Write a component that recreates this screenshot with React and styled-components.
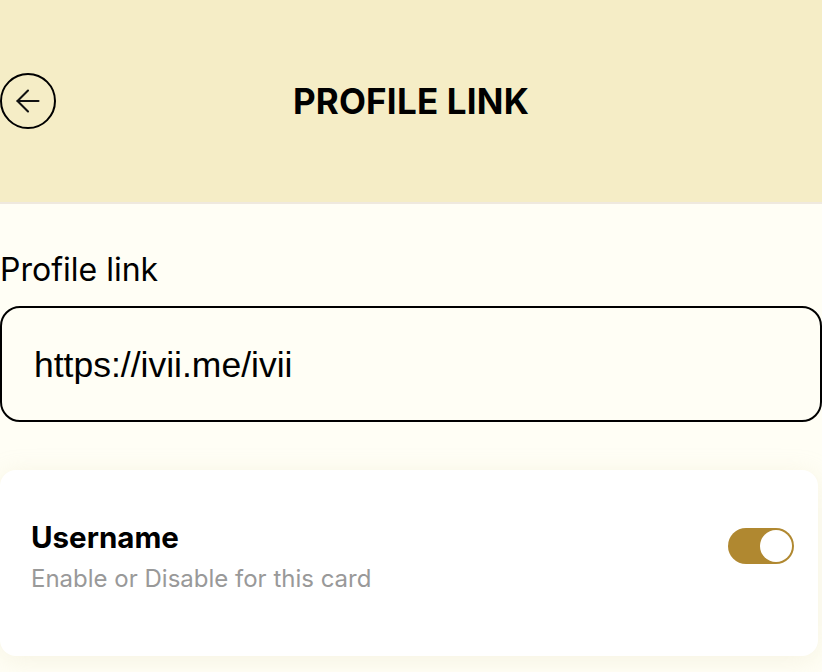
import React from 'react'
import styled, {createGlobalStyle} from 'styled-components'
import {ArrowLeft} from 'lucide-react'

const GlobalStyle = createGlobalStyle`
  html, body {
    margin: 0;
    padding: 0;
    background: #fffef5;
  }
  body {
    font-family: Inter, "Noto Sans", sans-serif;
    color: #000;
  }
  * {
    box-sizing: border-box;
  }
`

const Page = styled.div`
  width: 822px;
  min-height: 672px;
  background: #fffef5;
`

const Header = styled.header`
  height: 204px;
  background: #f5edc6;
  border-bottom: 2px solid #efe9df;
  display: flex;
  align-items: center;
  justify-content: center;
  position: relative;
`

const BackButton = styled.button`
  position: absolute;
  left: 0;
  top: 73px;
  width: 56px;
  height: 56px;
  border-radius: 50%;
  border: 2px solid #000;
  background: transparent;
  display: flex;
  align-items: center;
  justify-content: center;
  padding: 0;
  cursor: pointer;
  color: #111;
`

const Title = styled.h1`
  margin: 0;
  font-size: 35px;
  font-weight: 700;
  letter-spacing: 0.2px;
`

const Content = styled.main`
  padding-top: 48px;
  display: flex;
  flex-direction: column;
`

const Label = styled.label`
  font-size: 32px;
  line-height: 36px;
  margin-bottom: 18px;
`

const LinkInput = styled.input`
  width: 822px;
  height: 116px;
  border: 2px solid #000;
  border-radius: 20px;
  background: transparent;
  padding: 2px 32px 0;
  font-family: "Liberation Sans", Arial, sans-serif;
  font-size: 35.5px;
  color: #000;
  outline: none;
`

const Card = styled.section`
  margin-top: 48px;
  width: 818px;
  height: 186px;
  background: #fff;
  border-radius: 16px;
  box-shadow: 0 4px 24px rgba(220, 210, 170, 0.25);
  display: flex;
  align-items: flex-start;
  justify-content: space-between;
  padding: 50px 24px 0 31px;
`

const CardText = styled.div`
  display: flex;
  flex-direction: column;
  gap: 10px;
`

const CardTitle = styled.div`
  font-size: 29.5px;
  font-weight: 700;
  line-height: 34px;
`

const CardSub = styled.div`
  font-size: 24px;
  color: #999;
  line-height: 30px;
`

const Toggle = styled.div`
  width: 66px;
  height: 36px;
  border-radius: 18px;
  background: ${p => (p.on ? '#b08830' : '#ccc')};
  display: flex;
  align-items: center;
  justify-content: ${p => (p.on ? 'flex-end' : 'flex-start')};
  padding: 2px;
  margin-top: 8px;
`

const Knob = styled.div`
  width: 32px;
  height: 32px;
  border-radius: 50%;
  background: #fff;
`

const App = () => (
  <Page>
    <GlobalStyle />
    <Header>
      <BackButton aria-label="Back">
        <ArrowLeft size={36} strokeWidth={1.4} />
      </BackButton>
      <Title>PROFILE LINK</Title>
    </Header>
    <Content>
      <Label>Profile link</Label>
      <LinkInput defaultValue="https://ivii.me/ivii" />
      <Card>
        <CardText>
          <CardTitle>Username</CardTitle>
          <CardSub>Enable or Disable for this card</CardSub>
        </CardText>
        <Toggle on>
          <Knob />
        </Toggle>
      </Card>
    </Content>
  </Page>
)

export default App
